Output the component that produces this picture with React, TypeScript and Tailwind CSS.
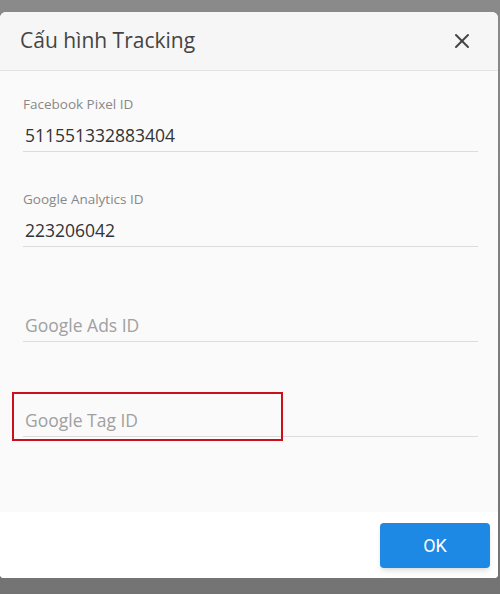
import { X } from "lucide-react";

interface FieldItem {
  label: string;
  value: string;
  placeholder?: string;
  highlight?: boolean;
}

const fields: FieldItem[] = [
  { label: "Facebook Pixel ID", value: "511551332883404" },
  { label: "Google Analytics ID", value: "223206042" },
  { label: "", value: "", placeholder: "Google Ads ID" },
  { label: "", value: "", placeholder: "Google Tag ID", highlight: true },
];

function Field({ item }: { item: FieldItem }) {
  return (
    <div className="relative flex flex-col">
      <div className="h-4 text-[13.5px] leading-4 text-[#888]">{item.label}</div>
      <div className="mt-[7px] h-[33px] border-b border-[#dcdcdc] flex items-center pl-[2px]">
        {item.value ? (
          <span className="text-[17.5px] text-[#333]">{item.value}</span>
        ) : (
          <span className="text-[17.5px] text-[#a0a0a0]">{item.placeholder}</span>
        )}
      </div>
      {item.highlight && (
        <div className="absolute left-[-11px] top-[11px] w-[271px] h-[49px] border-[2.5px] border-[#cc0f18]" />
      )}
    </div>
  );
}

export default function App() {
  return (
    <div
      className="w-[500px] h-[594px] bg-gradient-to-b from-[#8a8a8a] to-[#737373] pt-3 overflow-hidden"
      style={{ fontFamily: '"Open Sans", "Noto Sans", sans-serif' }}
    >
      <div className="w-[498px] rounded-t-[6px] rounded-b-[4px] overflow-hidden bg-white">
        <div className="h-[59px] bg-[#f6f6f6] border-b border-[#e4e4e4] flex items-center justify-between pl-5 pr-6">
          <h2 className="text-[21px] text-[#444]">Cấu hình Tracking</h2>
          <X size={24} strokeWidth={2} className="text-[#444]" />
        </div>
        <div className="h-[441px] bg-[#fafafa] pl-[23px] pr-5 pt-[25px] flex flex-col gap-[39px]">
          {fields.map((item, i) => (
            <Field key={i} item={item} />
          ))}
        </div>
        <div className="h-[66px] bg-white flex items-center justify-end pr-2">
          <button
            className="w-[110px] h-[45px] rounded-[4px] bg-[#1e88e5] text-white text-[18px] shadow-md"
            style={{ fontFamily: "Roboto, sans-serif" }}
          >
            OK
          </button>
        </div>
      </div>
    </div>
  );
}
